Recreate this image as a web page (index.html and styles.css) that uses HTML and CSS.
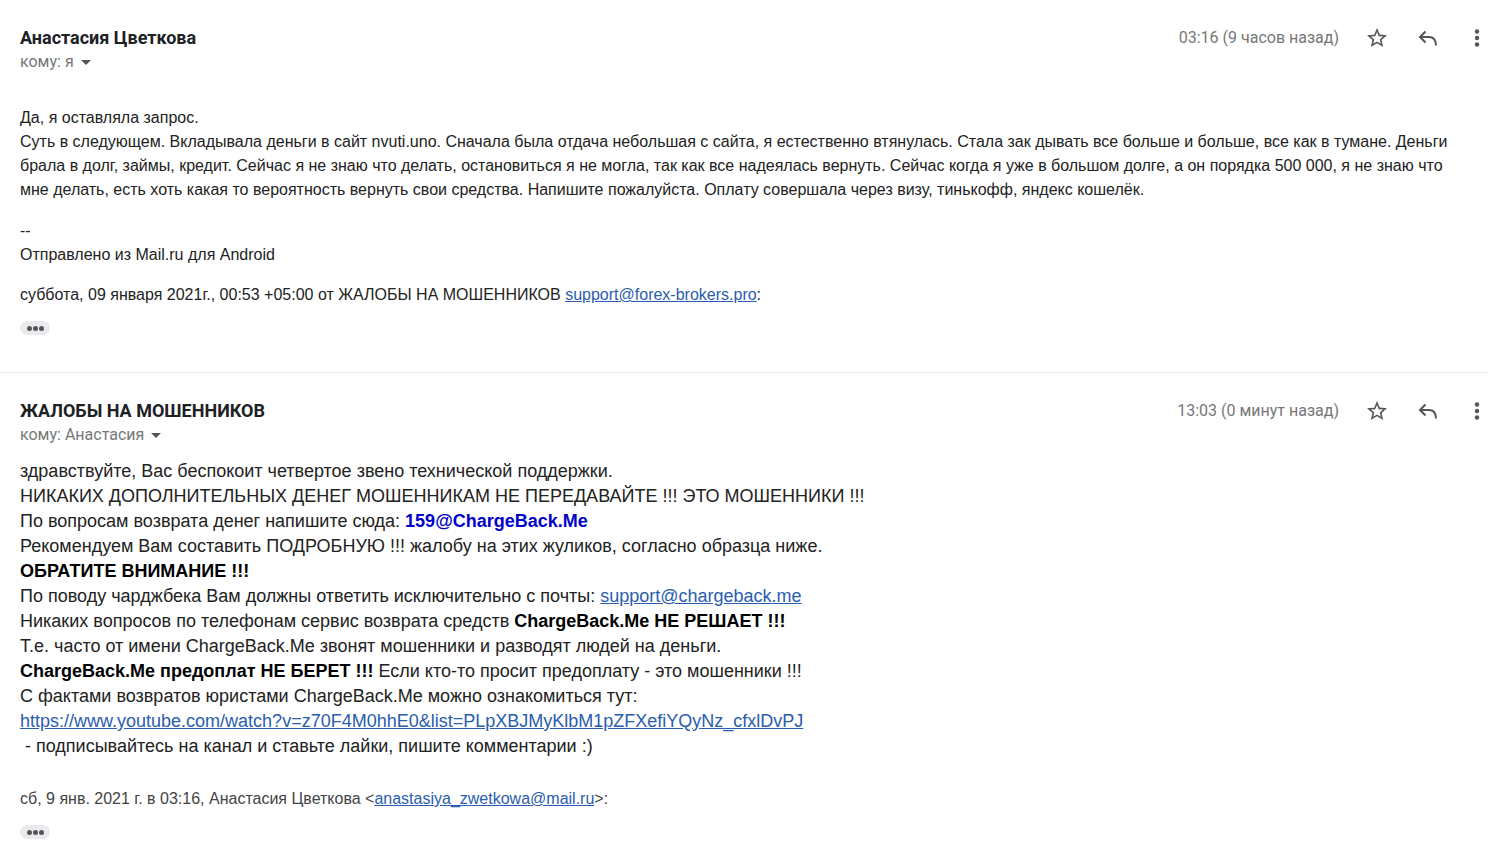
FILE: index.html
```
<!DOCTYPE html>
<html lang="ru">
<head>
  <meta charset="utf-8">
  <title>Переписка</title>
  <link rel="stylesheet" href="styles.css">
</head>
<body>
  <main class="thread">
    <article class="message">
      <header class="message-header">
        <div class="sender">
          <h2>Анастасия Цветкова</h2>
          <button class="recipient">кому: я <span class="caret"></span></button>
        </div>
        <div class="actions">
          <span class="time">03:16 (9 часов назад)</span>
          <button class="icon-btn" aria-label="Пометить">
            <svg class="star" viewBox="0 0 24 24"><path d="M22 9.24l-7.19-.62L12 2 9.19 8.63 2 9.24l5.46 4.73L5.82 21 12 17.27 18.18 21l-1.63-7.03L22 9.24zM12 15.4l-3.76 2.27 1-4.28-3.32-2.88 4.38-.38L12 6.1l1.71 4.04 4.38.38-3.32 2.88 1 4.28L12 15.4z"/></svg>
          </button>
          <button class="icon-btn" aria-label="Ответить">
            <svg viewBox="0 0 22 22"><path class="stroke" d="M9.5 4.5L4 10l5.5 5.5M4 10h9q7 0 7 8.5"/></svg>
          </button>
          <button class="icon-btn" aria-label="Ещё">
            <svg viewBox="0 0 22 22"><circle cx="11" cy="4.5" r="2.2"/><circle cx="11" cy="11" r="2.2"/><circle cx="11" cy="17.5" r="2.2"/></svg>
          </button>
        </div>
      </header>
      <div class="text">
        <p>Да, я оставляла запрос.<br>
        Суть в следующем. Вкладывала деньги в сайт nvuti.uno. Сначала была отдача небольшая с сайта, я естественно втянулась. Стала зак дывать все больше и больше, все как в тумане. Деньги брала в долг, займы, кредит. Сейчас я не знаю что делать, остановиться я не могла, так как все надеялась вернуть. Сейчас когда я уже в большом долге, а он порядка 500 000, я не знаю что мне делать, есть хоть какая то вероятность вернуть свои средства. Напишите пожалуйста. Оплату совершала через визу, тинькофф, яндекс кошелёк.</p>
        <p class="signature">--<br>Отправлено из Mail.ru для Android</p>
        <p class="quote">суббота, 09 января 2021г., 00:53 +05:00 от ЖАЛОБЫ НА МОШЕННИКОВ <a href="mailto:support@forex-brokers.pro">support@forex-brokers.pro</a>:</p>
      </div>
      <button class="more-btn" aria-label="Показать скрытый текст"><i></i><i></i><i></i></button>
    </article>

    <article class="message">
      <header class="message-header">
        <div class="sender">
          <h2>ЖАЛОБЫ НА МОШЕННИКОВ</h2>
          <button class="recipient">кому: Анастасия <span class="caret"></span></button>
        </div>
        <div class="actions">
          <span class="time">13:03 (0 минут назад)</span>
          <button class="icon-btn" aria-label="Пометить">
            <svg class="star" viewBox="0 0 24 24"><path d="M22 9.24l-7.19-.62L12 2 9.19 8.63 2 9.24l5.46 4.73L5.82 21 12 17.27 18.18 21l-1.63-7.03L22 9.24zM12 15.4l-3.76 2.27 1-4.28-3.32-2.88 4.38-.38L12 6.1l1.71 4.04 4.38.38-3.32 2.88 1 4.28L12 15.4z"/></svg>
          </button>
          <button class="icon-btn" aria-label="Ответить">
            <svg viewBox="0 0 22 22"><path class="stroke" d="M9.5 4.5L4 10l5.5 5.5M4 10h9q7 0 7 8.5"/></svg>
          </button>
          <button class="icon-btn" aria-label="Ещё">
            <svg viewBox="0 0 22 22"><circle cx="11" cy="4.5" r="2.2"/><circle cx="11" cy="11" r="2.2"/><circle cx="11" cy="17.5" r="2.2"/></svg>
          </button>
        </div>
      </header>
      <div class="text-large">
        здравствуйте, Вас беспокоит четвертое звено технической поддержки.<br>
        НИКАКИХ ДОПОЛНИТЕЛЬНЫХ ДЕНЕГ МОШЕННИКАМ НЕ ПЕРЕДАВАЙТЕ !!! ЭТО МОШЕННИКИ !!!<br>
        По вопросам возврата денег напишите сюда: <b class="blue">159@ChargeBack.Me</b><br>
        Рекомендуем Вам составить ПОДРОБНУЮ !!! жалобу на этих жуликов, согласно образца ниже.<br>
        <b>ОБРАТИТЕ ВНИМАНИЕ !!!</b><br>
        По поводу чарджбека Вам должны ответить исключительно с почты: <a href="mailto:support@chargeback.me">support@chargeback.me</a><br>
        Никаких вопросов по телефонам сервис возврата средств <b>ChargeBack.Me НЕ РЕШАЕТ !!!</b><br>
        Т.е. часто от имени ChargeBack.Me звонят мошенники и разводят людей на деньги.<br>
        <b>ChargeBack.Me предоплат НЕ БЕРЕТ !!!</b> Если кто-то просит предоплату - это мошенники !!!<br>
        С фактами возвратов юристами ChargeBack.Me можно ознакомиться тут:<br>
        <a href="https://www.youtube.com/watch?v=z70F4M0hhE0&amp;list=PLpXBJMyKlbM1pZFXefiYQyNz_cfxlDvPJ">https://www.youtube.com/watch?v=z70F4M0hhE0&amp;list=PLpXBJMyKlbM1pZFXefiYQyNz_cfxlDvPJ</a><br>
        &nbsp;- подписывайтесь на канал и ставьте лайки, пишите комментарии :)
      </div>
      <p class="reply-info">сб, 9 янв. 2021 г. в 03:16, Анастасия Цветкова &lt;<a href="mailto:anastasiya_zwetkowa@mail.ru">anastasiya_zwetkowa@mail.ru</a>&gt;:</p>
      <button class="more-btn" aria-label="Показать скрытый текст"><i></i><i></i><i></i></button>
    </article>
  </main>
</body>
</html>
```
FILE: styles.css
```
body {
  margin: 0;
  background: #fff;
  color: #222;
  font-family: "Liberation Sans", Arial, sans-serif;
  font-size: 16px;
}

button {
  border: none;
  background: none;
  padding: 0;
  cursor: pointer;
}

a {
  color: #2a5db0;
}

p {
  margin: 0;
}

.thread {
  margin-right: 18px;
}

.message {
  padding: 24px 0 37px 20px;
  border-bottom: 1px solid #e8e8e8;
}

.message:last-child {
  border-bottom: none;
  padding-bottom: 0;
}

.message-header {
  display: flex;
  justify-content: space-between;
  align-items: flex-start;
  font-family: Roboto, sans-serif;
}

.sender {
  display: flex;
  flex-direction: column;
  align-items: flex-start;
}

.sender h2 {
  margin: 0;
  font-size: 18px;
  line-height: 28px;
  font-weight: 700;
  color: #202124;
}

.recipient {
  display: flex;
  align-items: center;
  gap: 7px;
  font-family: inherit;
  font-size: 16px;
  line-height: 20px;
  color: #777;
}

.caret {
  border: 5px solid transparent;
  border-top-color: #555;
  border-bottom: none;
}

.actions {
  display: flex;
  align-items: center;
  height: 27px;
}

.time {
  margin-right: 26px;
  font-size: 16px;
  color: #777;
}

.icon-btn {
  display: flex;
  width: 24px;
  height: 24px;
  margin-right: 26px;
  align-items: center;
  justify-content: center;
}

.icon-btn:last-child {
  margin-right: 0;
}

.icon-btn svg {
  width: 22px;
  height: 22px;
  fill: #555;
}

.icon-btn .star {
  width: 24px;
  height: 24px;
}

.icon-btn .stroke {
  fill: none;
  stroke: #555;
  stroke-width: 2;
}

.text {
  margin-top: 34px;
  padding-right: 20px;
  line-height: 24px;
}

.signature {
  margin-top: 17px;
}

.quote {
  margin-top: 16px;
}

.more-btn {
  display: flex;
  align-items: center;
  justify-content: center;
  gap: 1px;
  width: 30px;
  height: 14px;
  margin-top: 14px;
  border-radius: 7px;
  background: #e8eaed;
}

.more-btn i {
  width: 5px;
  height: 5px;
  border-radius: 50%;
  background: #555;
}

.text-large {
  margin-top: 14px;
  font-size: 18px;
  line-height: 25px;
}

.text-large b {
  color: #000;
}

.text-large .blue {
  color: #00c;
}

.reply-info {
  margin-top: 28px;
  line-height: 24px;
  color: #444;
}
```
